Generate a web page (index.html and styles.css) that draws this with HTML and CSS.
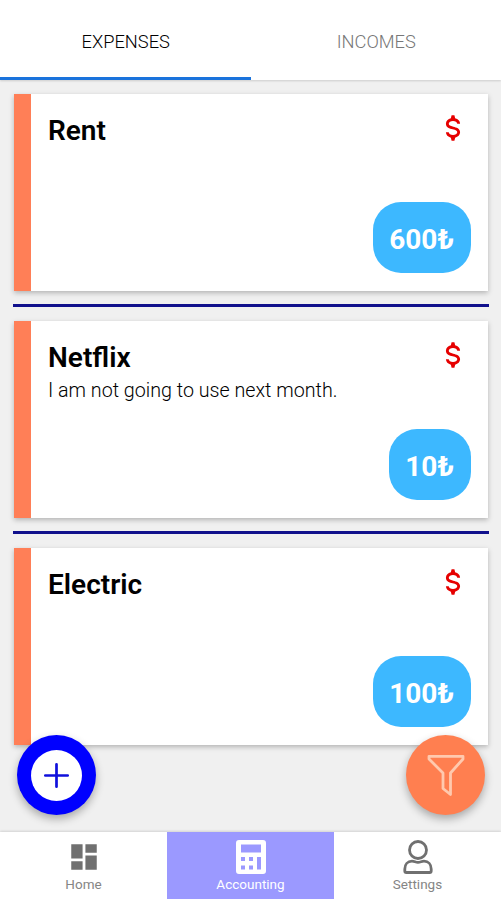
FILE: index.html
```html
<!DOCTYPE html>
<html lang="en">
<head>
    <meta charset="UTF-8">
    <title>Accounting</title>
    <link rel="stylesheet" href="styles.css">
</head>
<body>
    <svg class="sprite">
        <symbol id="dollar" viewBox="0 0 24 24">
            <path d="M7,15H9C9,16.08 10.37,17 12,17C13.63,17 15,16.08 15,15C15,13.9 13.96,13.5 11.76,12.97C9.64,12.44 7,11.78 7,9C7,7.21 8.47,5.69 10.5,5.18L11,3H13L13.5,5.18C15.53,5.69 17,7.21 17,9H15C15,7.92 13.63,7 12,7C10.37,7 9,7.92 9,9C9,10.1 10.04,10.5 12.24,11.03C14.36,11.56 17,12.22 17,15C17,16.79 15.53,18.31 13.5,18.82L13,21H11L10.5,18.82C8.47,18.31 7,16.79 7,15Z"/>
        </symbol>
    </svg>

    <header class="tabs">
        <div class="tab active">EXPENSES</div>
        <div class="tab">INCOMES</div>
    </header>

    <main class="list">
        <article class="card">
            <div class="info">
                <h2>Rent</h2>
            </div>
            <div class="side">
                <svg class="dollar"><use href="#dollar"/></svg>
                <span class="price">600₺</span>
            </div>
        </article>
        <hr>
        <article class="card">
            <div class="info">
                <h2>Netflix</h2>
                <p>I am not going to use next month.</p>
            </div>
            <div class="side">
                <svg class="dollar"><use href="#dollar"/></svg>
                <span class="price">10₺</span>
            </div>
        </article>
        <hr>
        <article class="card">
            <div class="info">
                <h2>Electric</h2>
            </div>
            <div class="side">
                <svg class="dollar"><use href="#dollar"/></svg>
                <span class="price">100₺</span>
            </div>
        </article>
    </main>

    <!-- Floating buttons -->
    <button class="fab add" aria-label="Add">
        <svg width="51" height="51" viewBox="0 0 51 51">
            <circle cx="25.5" cy="25.5" r="25.5" fill="#fff"/>
            <path d="M25.5 14.3v22.4M14.3 25.5h22.4" stroke="#1010dc" stroke-width="2.7" stroke-linecap="round"/>
        </svg>
    </button>
    <button class="fab filter" aria-label="Filter">
        <svg width="40" height="44" viewBox="0 0 40 44" fill="none" stroke="#ffc9ae" stroke-width="2.8" stroke-linejoin="round">
            <path d="M3 3.3H37V6L24.5 20V41.5L17 35.5V20L3 6Z"/>
        </svg>
    </button>

    <nav class="bottom-nav">
        <a class="item">
            <svg width="34" height="34" viewBox="0 0 24 24" fill="#707070">
                <path d="M3 13h8V3H3v10zm0 8h8v-6H3v6zm10 0h8V11h-8v10zm0-18v6h8V3h-8z"/>
            </svg>
            <span>Home</span>
        </a>
        <a class="item selected">
            <svg width="30" height="34" viewBox="0 0 30 34" fill="#fff" fill-rule="evenodd">
                <path d="M3 0H27Q30 0 30 3V31Q30 34 27 34H3Q0 34 0 31V3Q0 0 3 0ZM5 4.5V12.5H25V4.5ZM5 17V21H9V17ZM13 17V21H17V17ZM21 17V29.5H25V17ZM5 25.5V29.5H9V25.5ZM13 25.5V29.5H17V25.5Z"/>
            </svg>
            <span>Accounting</span>
        </a>
        <a class="item">
            <svg width="30" height="34" viewBox="0 0 30 34" fill="none" stroke="#707070" stroke-width="2.8" stroke-linejoin="round">
                <circle cx="15" cy="10" r="8.5"/>
                <path d="M9 21.2C11.5 21.2 12.5 22.4 15 22.4S18.5 21.2 21 21.2C25.3 21.2 28.2 24.5 28.2 29V31Q28.2 32.5 26.7 32.5H3.3Q1.8 32.5 1.8 31V29C1.8 24.5 4.7 21.2 9 21.2Z"/>
            </svg>
            <span>Settings</span>
        </a>
    </nav>
</body>
</html>
```

FILE: styles.css
```css
* {
    box-sizing: border-box;
}

body {
    display: flex;
    flex-direction: column;
    height: 900px;
    margin: 0;
    overflow: hidden;
    background-color: #f0f0f0;
    font-family: Roboto, "Liberation Sans", sans-serif;
    color: #000;
}

.sprite {
    position: absolute;
    width: 0;
    height: 0;
}

.tabs {
    display: flex;
    flex-shrink: 0;
    height: 80px;
    background-color: #fff;
    box-shadow: 0 1px 2px rgba(0,0,0,0.15);
}

.tab {
    flex: 1;
    padding: 4px 0 0 1px;
    border-bottom: 3px solid transparent;
    line-height: 76px;
    text-align: center;
    font-size: 18.3px;
    font-weight: 300;
    color: #777;
}

.tab.active {
    border-bottom-color: #1a73dc;
    color: #000;
}

.list {
    flex: 1;
    padding: 14px 12px 0 13px;
}

.card {
    display: flex;
    justify-content: space-between;
    height: 197px;
    margin: 0 1px;
    padding: 17px 17px 18px 17px;
    border-left: 17px solid #ff7f57;
    background-color: #fff;
    box-shadow: 0 2px 5px rgba(0,0,0,0.25);
}

.card h2 {
    margin: 3px 0 0;
    font-size: 28px;
    line-height: 34px;
    font-weight: 600;
}

.card p {
    margin: 4px 0 0;
    font-size: 19.7px;
    line-height: 24px;
    font-weight: 300;
}

.side {
    display: flex;
    flex-direction: column;
    justify-content: space-between;
    align-items: flex-end;
}

.dollar {
    width: 34px;
    height: 34px;
    margin-right: 1px;
    fill: #e60000;
}

.price {
    height: 71px;
    padding: 2px 17px 0 16px;
    border-radius: 28px;
    background-color: #3db8ff;
    line-height: 71px;
    font-size: 28px;
    font-weight: 700;
    color: #fff;
}

hr {
    height: 3px;
    margin: 13px 0 14px;
    border: none;
    background-color: #10108c;
}

.fab {
    position: absolute;
    top: 735px;
    display: flex;
    justify-content: center;
    align-items: center;
    width: 79px;
    height: 80px;
    padding: 0;
    border: none;
    border-radius: 50%;
    box-shadow: 0 4px 8px rgba(0,0,0,0.3);
}

.add {
    left: 17px;
    background-color: #0000ff;
}

.filter {
    left: 406px;
    background-color: #ff7f50;
}

.bottom-nav {
    display: flex;
    flex-shrink: 0;
    height: 68px;
    padding-bottom: 1px;
    background-color: #fff;
    box-shadow: 0 -1px 2px rgba(0,0,0,0.12);
}

.item {
    display: flex;
    flex: 1;
    flex-direction: column;
    align-items: center;
    padding-top: 8px;
    font-size: 13.5px;
    line-height: 20px;
    color: #858585;
}

.item.selected {
    background-color: #9b99ff;
    color: #fff;
}
```
